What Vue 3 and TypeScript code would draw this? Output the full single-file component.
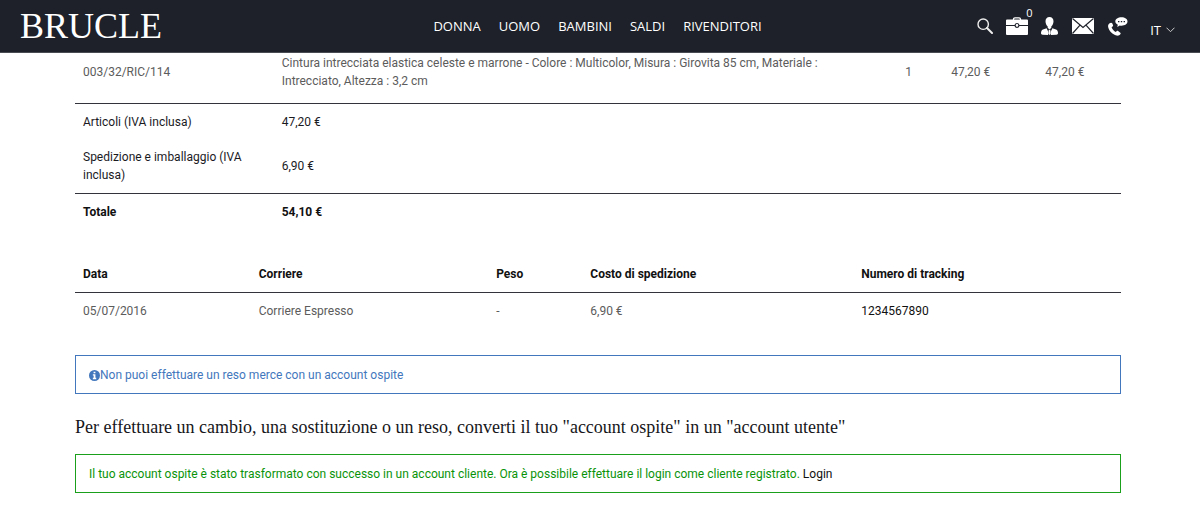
<script setup lang="ts">
interface OrderLine {
  code: string
  description: string
  quantity: number
  unitPrice: string
  total: string
}

interface Shipment {
  date: string
  carrier: string
  weight: string
  cost: string
  tracking: string
}

const sections: string[] = ['DONNA', 'UOMO', 'BAMBINI', 'SALDI', 'RIVENDITORI']

const lines: OrderLine[] = [
  {
    code: '003/32/RIC/114',
    description:
      'Cintura intrecciata elastica celeste e marrone - Colore : Multicolor, Misura : Girovita 85 cm, Materiale : Intrecciato, Altezza : 3,2 cm',
    quantity: 1,
    unitPrice: '47,20 €',
    total: '47,20 €',
  },
]

const shipmentHeads: string[] = ['Data', 'Corriere', 'Peso', 'Costo di spedizione', 'Numero di tracking']

const shipments: Shipment[] = [
  { date: '05/07/2016', carrier: 'Corriere Espresso', weight: '-', cost: '6,90 €', tracking: '1234567890' },
]
</script>

<template>
  <div class="page">
    <header class="bar">
      <a class="logo" href="#">BRUCLE</a>
      <nav class="menu">
        <a v-for="s in sections" :key="s" href="#">{{ s }}</a>
      </nav>
      <div class="tools">
        <button type="button" class="tool search" aria-label="Cerca">
          <svg width="16" height="16" viewBox="0 0 16 16" fill="none" stroke="#eee">
            <circle cx="6.2" cy="6.2" r="5.2" stroke-width="1.4" />
            <path d="M10 10l5 5" stroke-width="2" stroke-linecap="round" />
          </svg>
        </button>
        <a class="tool cart" href="#" aria-label="Carrello">
          <svg width="22" height="18" viewBox="0 0 22 18">
            <path d="M7.5 3V2.2Q7.5.8 9 .8h4q1.5 0 1.5 1.4V3" fill="none" stroke="#fff" stroke-width="1.3" />
            <path d="M1 2.5h20q1 0 1 1V8h-8.5a2.6 2.6 0 0 0-5 0H0V3.5q0-1 1-1z" fill="#fff" />
            <path d="M0 9h8.5a2.6 2.6 0 0 0 5 0H22v8q0 1-1 1H1q-1 0-1-1z" fill="#fff" />
            <circle cx="11" cy="8.4" r="1.3" fill="#fff" />
          </svg>
          <span class="count">0</span>
        </a>
        <a class="tool user" href="#" aria-label="Account">
          <svg width="17" height="18" viewBox="0 0 17 18" fill="#fff">
            <path d="M8.5 0C11 0 12.5 1.7 12.5 4.2c0 2.2-.9 4.2-2.2 5.2v1.5l-1.8 1.3-1.8-1.3V9.4C5.4 8.4 4.5 6.4 4.5 4.2 4.5 1.7 6 0 8.5 0z" />
            <path d="M5.6 11.2L2 12.6C.5 13.2 0 14.5 0 16.3c0 .9.6 1.4 1.5 1.5L7 18l.4-3z" />
            <path d="M11.4 11.2l3.6 1.4c1.5.6 2 1.9 2 3.7 0 .9-.6 1.4-1.5 1.5L10 18l-.4-3z" />
            <path d="M7.8 12.8h1.4l.5 4.2-1.2 1-1.2-1z" />
          </svg>
        </a>
        <a class="tool mail" href="#" aria-label="Contatti">
          <svg width="22" height="16" viewBox="0 0 22 16">
            <rect width="22" height="16" fill="#fff" />
            <path d="M.5.5L11 9.5 21.5.5M.5 15.5L8 7.2M21.5 15.5L14 7.2" fill="none" stroke="#1e2129" stroke-width="1.2" />
          </svg>
        </a>
        <a class="tool phone" href="#" aria-label="Assistenza">
          <svg width="20" height="19" viewBox="0 0 20 19">
            <path d="M1.6 6.2C.2 7.3-.2 8.8.3 10.5c1.1 3.8 4.2 7 8.2 8 1.7.4 3-.1 4-1.6.3-.5.2-.9-.2-1.2l-2.200-1.700c-.5-.4-1-.3-1.400.1l-.8.9c-2-.9-3.6-2.700-4.300-4.800l1-.7c.5-.4.6-.9.4-1.400L4.2 6.3c-.3-.9-1.800-.8-2.600-.1z" fill="#fff" />
            <path d="M13.500.3c3.500 0 6 1.900 6 4.200s-2.500 4.200-6 4.200c-.6 0-1.200-.1-1.700-.2L9.300 10l.5-2.300C8.300 7 7.300 5.900 7.300 4.500c0-2.300 2.700-4.200 6.200-4.200z" fill="#fff" />
            <path d="M10 4h1.400v1.200H10zM12.800 4h1.400v1.200h-1.400zM15.600 4h1.400v1.200h-1.400z" fill="#1e2129" />
          </svg>
        </a>
        <button type="button" class="tool lang">
          IT
          <svg width="9" height="6" viewBox="0 0 9 6" fill="none" stroke="#ccc">
            <path d="M.5.7l4 4 4-4" />
          </svg>
        </button>
      </div>
    </header>

    <main class="content">
      <table class="order">
        <colgroup>
          <col class="c-code" />
          <col class="c-desc" />
          <col class="c-qty" />
          <col class="c-unit" />
          <col class="c-total" />
        </colgroup>
        <tbody>
          <tr v-for="l in lines" :key="l.code">
            <td>{{ l.code }}</td>
            <td>{{ l.description }}</td>
            <td class="qty">{{ l.quantity }}</td>
            <td>{{ l.unitPrice }}</td>
            <td>{{ l.total }}</td>
          </tr>
        </tbody>
        <tfoot>
          <tr class="ruled">
            <td>Articoli (IVA inclusa)</td>
            <td colspan="4">47,20 €</td>
          </tr>
          <tr>
            <td>Spedizione e imballaggio (IVA inclusa)</td>
            <td colspan="4">6,90 €</td>
          </tr>
          <tr class="ruled sum">
            <td>Totale</td>
            <td colspan="4">54,10 €</td>
          </tr>
        </tfoot>
      </table>

      <table class="shipping">
        <colgroup>
          <col class="s-date" />
          <col class="s-carrier" />
          <col class="s-weight" />
          <col class="s-cost" />
          <col class="s-track" />
        </colgroup>
        <thead>
          <tr>
            <th v-for="h in shipmentHeads" :key="h" scope="col">{{ h }}</th>
          </tr>
        </thead>
        <tbody>
          <tr v-for="s in shipments" :key="s.tracking" class="ruled">
            <td>{{ s.date }}</td>
            <td>{{ s.carrier }}</td>
            <td>{{ s.weight }}</td>
            <td>{{ s.cost }}</td>
            <td><a href="#">{{ s.tracking }}</a></td>
          </tr>
        </tbody>
      </table>

      <p class="notice info">
        <svg width="11" height="11" viewBox="0 0 12 12" aria-hidden="true">
          <circle cx="6" cy="6" r="6" fill="#4377bd" />
          <path d="M5 1.8h2v1.7H5zM4.2 4.7H7v3.8h.9V10H4.200V8.500h.9V6.100h-.9z" fill="#fff" />
        </svg>
        <span>Non puoi effettuare un reso merce con un account ospite</span>
      </p>

      <h2>Per effettuare un cambio, una sostituzione o un reso, converti il tuo "account ospite" in un "account utente"</h2>

      <p class="notice success">
        <span>Il tuo account ospite è stato trasformato con successo in un account cliente. Ora è possibile effettuare il login come cliente registrato. <a href="#">Login</a></span>
      </p>
    </main>
  </div>
</template>

<style>
body {
  background: #fff;
}
</style>

<style scoped>
.page {
  font: 12px/18px Roboto, sans-serif;
  color: #5c5c5c;
}

a {
  color: inherit;
  text-decoration: none;
}

.bar {
  position: sticky;
  top: 0;
  z-index: 1;
  display: grid;
  grid-template-columns: 1fr auto 1fr;
  align-items: center;
  box-sizing: border-box;
  height: 53px;
  padding: 0 25px 0 20px;
  background: #1e2129;
  border-bottom: 1px solid #4a4c53;
  color: #fff;
  font-family: "Open Sans", sans-serif;
}

.logo {
  font: 36px/52px "Liberation Serif", serif;
}

.menu {
  display: flex;
  gap: 18px;
  font-size: 13px;
}

.tools {
  display: flex;
  align-items: center;
  justify-content: flex-end;
}

.tool {
  display: flex;
  align-items: center;
  position: relative;
  padding: 0;
  border: 0;
  background: none;
  color: #fff;
  font: inherit;
}

.tool svg {
  display: block;
}

.cart {
  margin-left: 13px;
}

.user {
  margin-left: 13px;
}

.mail {
  margin-left: 14px;
}

.phone {
  margin-left: 14px;
}

.count {
  position: absolute;
  left: 20px;
  top: -10px;
  font-size: 11px;
  line-height: 12px;
}

.lang {
  gap: 5px;
  margin-left: 22px;
  padding-top: 8px;
  font-size: 13px;
}

.content {
  margin: -12px 79px 0 75px;
  padding-bottom: 30px;
}

table {
  width: 100%;
  table-layout: fixed;
  border-collapse: separate;
  border-spacing: 0;
}

th,
td {
  padding: 9px 8px;
  text-align: left;
  vertical-align: middle;
}

th {
  color: #111;
}

.order tbody td {
  padding: 13px 8px;
}

.order tfoot {
  color: #1b1b1f;
}

.ruled td {
  border-top: 1px solid #33333b;
  padding-bottom: 8px;
}

.sum {
  font-weight: bold;
  color: #111;
}

.order .qty {
  padding-left: 12px;
  text-align: center;
}

.c-code {
  width: 19%;
}

.c-qty {
  width: 7%;
}

.c-unit {
  width: 9%;
}

.c-total {
  width: 8%;
}

.shipping {
  margin-top: 27px;
}

.shipping a {
  color: #111;
}

.s-date {
  width: 16.8%;
}

.s-carrier {
  width: 22.7%;
}

.s-weight {
  width: 9%;
}

.s-cost {
  width: 25.9%;
}

.notice {
  display: flex;
  align-items: center;
  margin: 0;
  padding: 10px 13px 9px;
  border: 1px solid;
}

.notice svg {
  flex: none;
}

.info {
  margin-top: 27px;
  color: #4377bd;
}

.success {
  color: #0a930a;
  border-color: #1ba01b;
}

.success a {
  color: #111;
}

h2 {
  margin: 21px 0 15px;
  font: 18px/24px "Liberation Serif", serif;
  color: #16161a;
}
</style>
